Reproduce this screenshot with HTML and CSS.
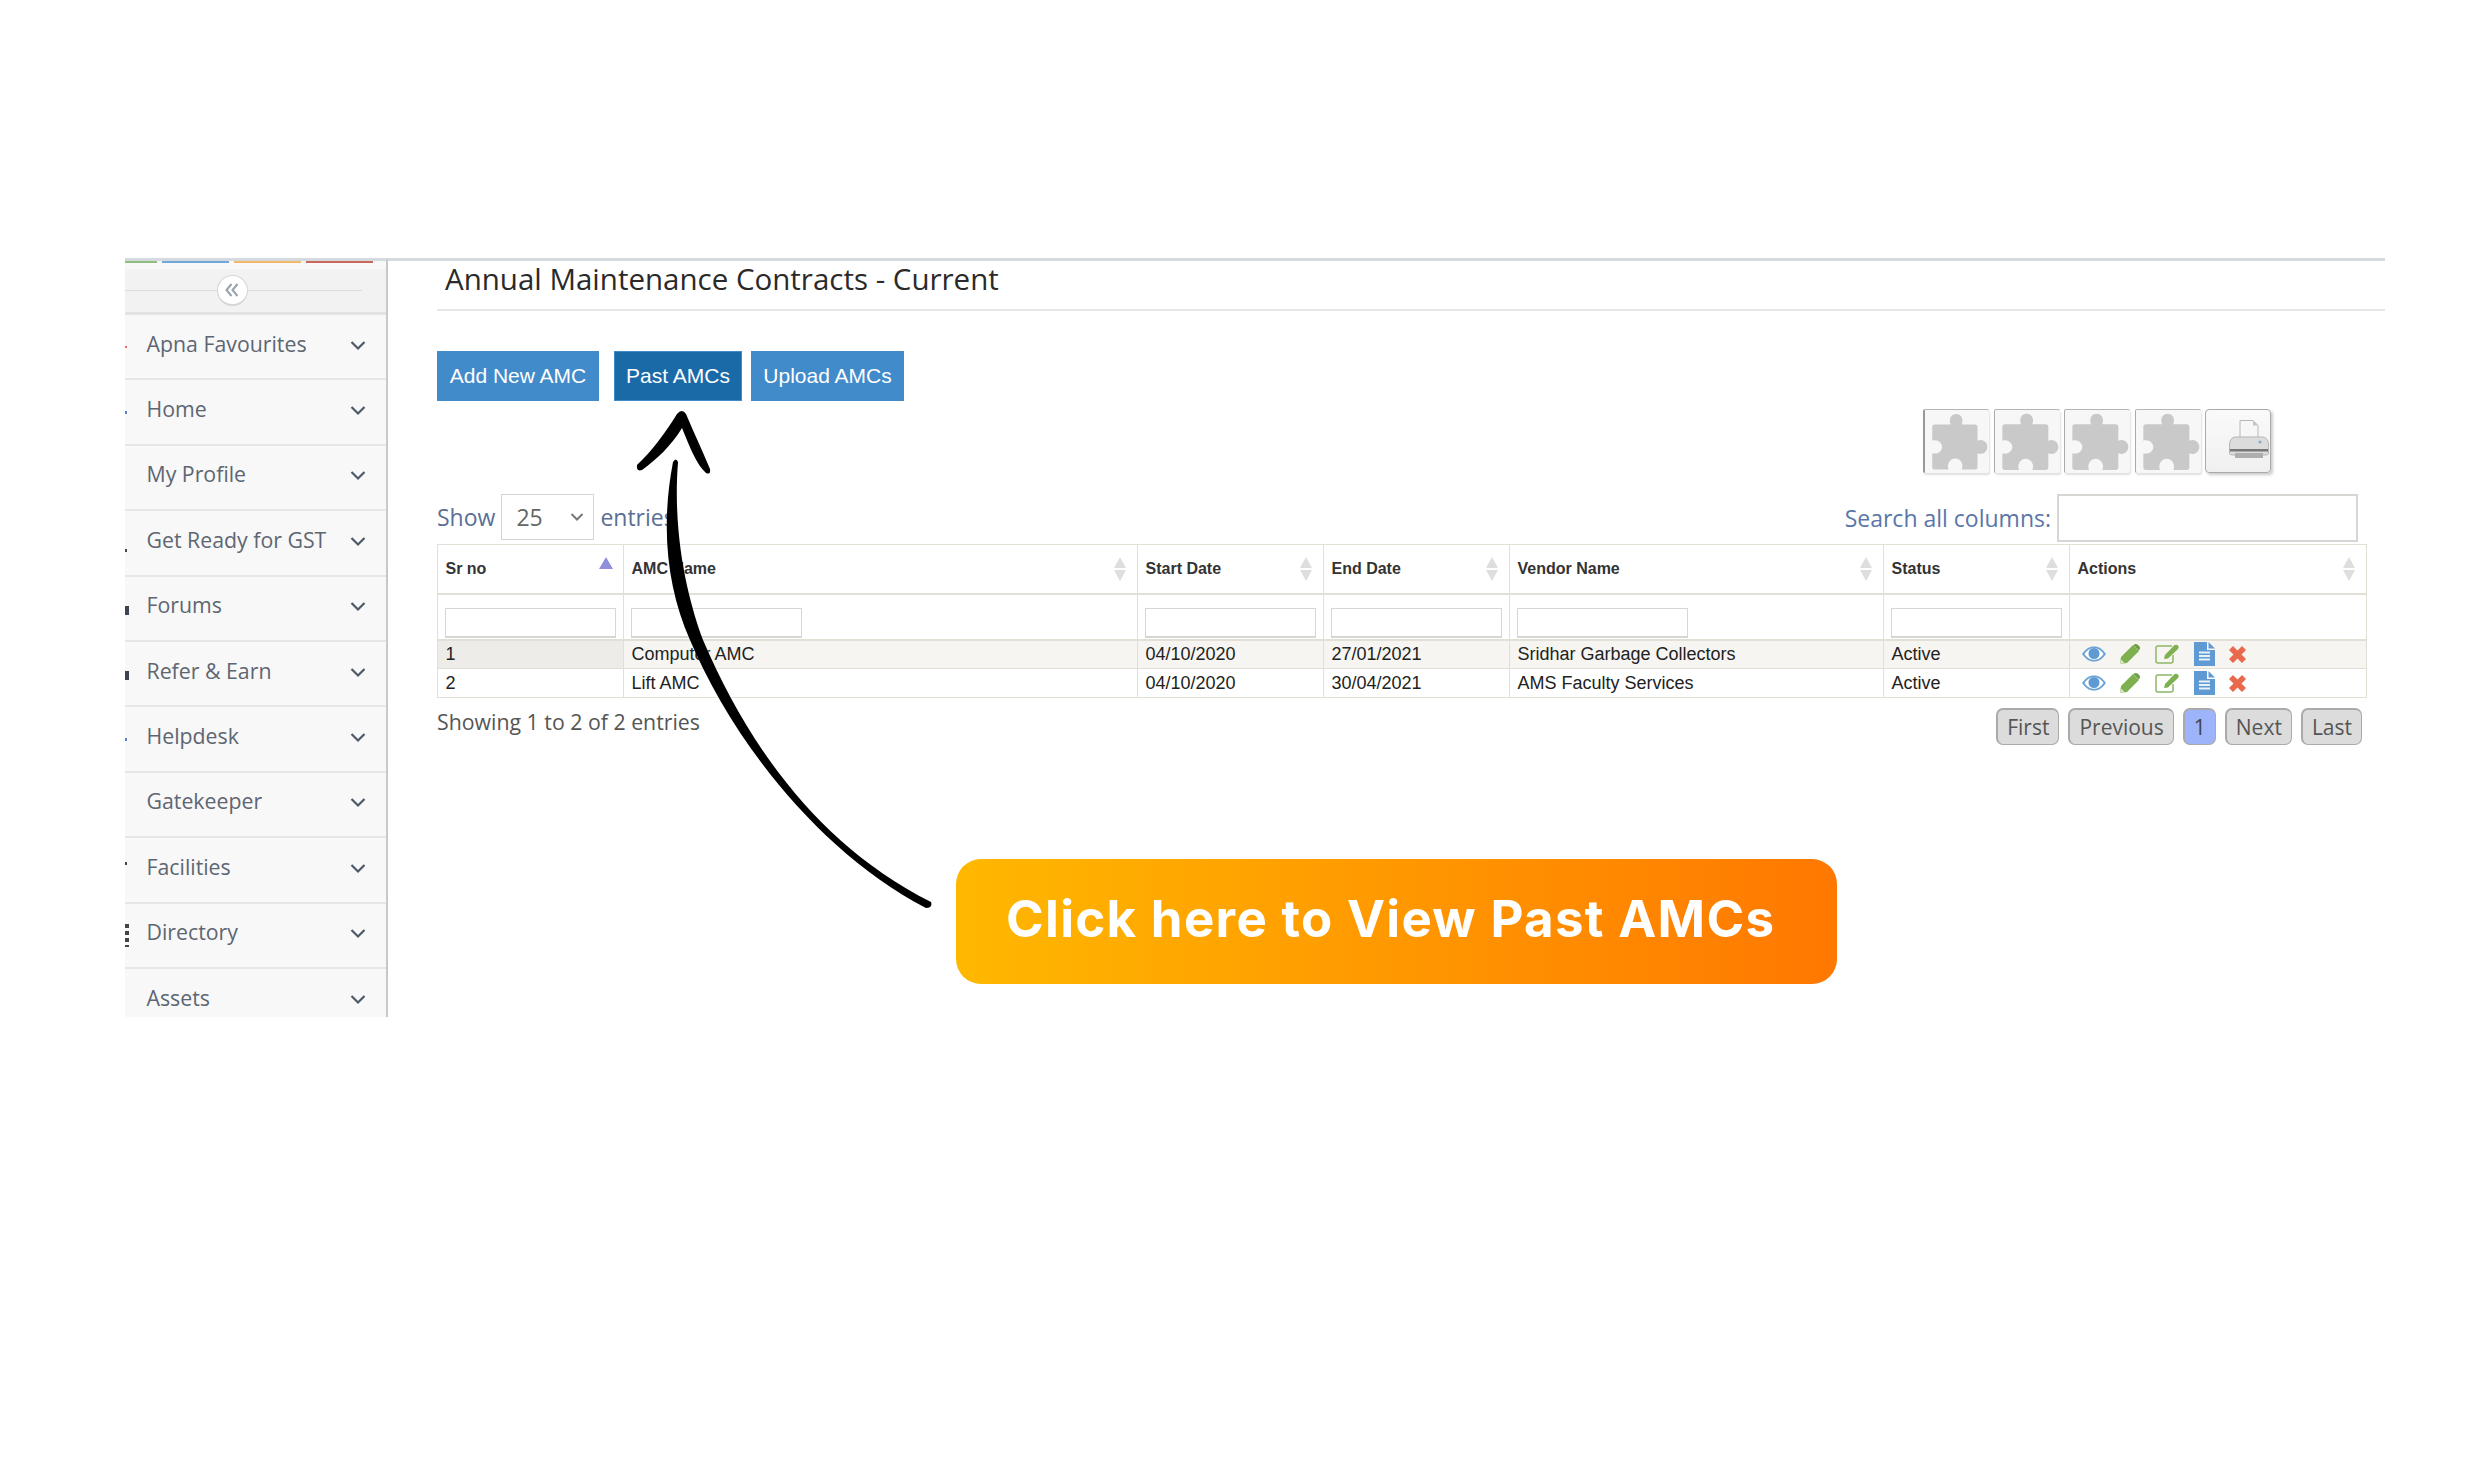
FILE: index.html
```html
<!DOCTYPE html>
<html lang="en">
<head>
<meta charset="utf-8">
<title>Annual Maintenance Contracts - Current</title>
<link rel="stylesheet" href="styles.css">
</head>
<body>
<svg class="defs" width="0" height="0" aria-hidden="true">
  <defs>
    <symbol id="puzzle" viewBox="0 0 195 195"><path d="M30 43H78C70 20 85 11 95 11C105 11 120 20 112 43H152Q160 43 160 51V92C180 85 190 100 190 111C190 122 180 137 160 130V172Q160 180 152 180H112C120 160 105 146 92 146C79 146 65 160 72 180H30Q22 180 22 172V130C40 135 52 122 52 111C52 100 40 87 22 92V51Q22 43 30 43Z"/></symbol>
    <symbol id="chev" viewBox="0 0 16 11"><path d="M1.500 2L8 8.500L14.500 2" fill="none" stroke="#4d5868" stroke-width="2.200"/></symbol>
    <symbol id="eye" viewBox="0 0 24 16"><path d="M0 8C5 1.500 8 0.500 12 0.500C16 0.500 19 1.500 24 8C19 14.500 16 15.500 12 15.500C8 15.500 5 14.500 0 8Z" fill="#6ba3d6"/><path d="M2.500 8C6 3 9 2.200 12 2.200C15 2.200 18 3 21.500 8C18 13 15 13.800 12 13.800C9 13.800 6 13 2.500 8Z" fill="#fff"/><circle cx="12" cy="7.500" r="5.500" fill="#5f9bd2"/></symbol>
    <symbol id="pencil" viewBox="0 0 20 20"><path d="M0 20L1 13L13 1L19 7L7 19Z" fill="#7fb050"/><path d="M14 .5Q16 -.5 17.500 .5L19.500 2.500Q20.500 4 19.500 5.500L18.800 6.500L13.500 1.200Z" fill="#6d9f42"/><path d="M0 20L1 15.500L4.500 19Z" fill="#dfe8d0"/></symbol>
    <symbol id="edit" viewBox="0 0 24 20"><path d="M17 2H3Q1 2 1 4V17Q1 19 3 19H16Q18 19 18 17V11" fill="none" stroke="#8db666" stroke-width="1.500"/><path d="M9 15L10 11L19 1.500Q21 0 23 1.500Q24.500 3.500 22.500 5.500L13 14.500Z" fill="#7fb050"/></symbol>
    <symbol id="file" viewBox="0 0 21 24"><path d="M0 0H13V8H21V24H0Z" fill="#5f9bd2"/><path d="M14.500 0L21 6.500H14.500Z" fill="#5f9bd2"/><path d="M5 10.500H16M5 14H16M5 17.500H16" stroke="#e8f0f8" stroke-width="1.800"/></symbol>
    <symbol id="cross" viewBox="0 0 17 17"><path d="M4 0L8.500 4.500L13 0L17 4L12.500 8.500L17 13L13 17L8.500 12.500L4 17L0 13L4.500 8.500L0 4Z" fill="#e8694d"/></symbol>
  </defs>
</svg>

<div class="page">
  <aside class="sidebar">
    <div class="stripes">
      <span class="stripe stripe-green"></span>
      <span class="stripe stripe-blue"></span>
      <span class="stripe stripe-orange"></span>
      <span class="stripe stripe-red"></span>
    </div>
    <div class="collapse">
      <span class="collapse-btn">
        <svg class="collapse-icon" viewBox="0 0 14 14"><path d="M6.500 1L1.500 7L6.500 13M12.500 1L7.500 7L12.500 13" fill="none" stroke="#98a1ac" stroke-width="2"/></svg>
      </span>
    </div>
    <ul class="menu">
      <li class="menu-item"><i class="mark mark-pink"></i><span>Apna Favourites</span><svg class="chev"><use href="#chev"/></svg></li>
      <li class="menu-item"><i class="mark mark-blue"></i><span>Home</span><svg class="chev"><use href="#chev"/></svg></li>
      <li class="menu-item"><span>My Profile</span><svg class="chev"><use href="#chev"/></svg></li>
      <li class="menu-item"><i class="mark mark-low"></i><span>Get Ready for GST</span><svg class="chev"><use href="#chev"/></svg></li>
      <li class="menu-item"><i class="mark mark-big"></i><span>Forums</span><svg class="chev"><use href="#chev"/></svg></li>
      <li class="menu-item"><i class="mark mark-big"></i><span>Refer &amp; Earn</span><svg class="chev"><use href="#chev"/></svg></li>
      <li class="menu-item"><i class="mark mark-blue"></i><span>Helpdesk</span><svg class="chev"><use href="#chev"/></svg></li>
      <li class="menu-item"><span>Gatekeeper</span><svg class="chev"><use href="#chev"/></svg></li>
      <li class="menu-item"><i class="mark mark-top"></i><span>Facilities</span><svg class="chev"><use href="#chev"/></svg></li>
      <li class="menu-item"><i class="mark mark-dots"></i><span>Directory</span><svg class="chev"><use href="#chev"/></svg></li>
      <li class="menu-item"><span>Assets</span><svg class="chev"><use href="#chev"/></svg></li>
    </ul>
  </aside>

  <main class="main">
    <h1 class="title">Annual Maintenance Contracts - Current</h1>

    <div class="actions">
      <a class="btn btn-add">Add New AMC</a>
      <a class="btn btn-past">Past AMCs</a>
      <a class="btn btn-upload">Upload AMCs</a>
    </div>

    <div class="toolbar">
      <span class="tool tool-first"><svg class="puzzle"><use href="#puzzle"/></svg></span>
      <span class="tool"><svg class="puzzle"><use href="#puzzle"/></svg></span>
      <span class="tool"><svg class="puzzle"><use href="#puzzle"/></svg></span>
      <span class="tool"><svg class="puzzle"><use href="#puzzle"/></svg></span>
      <span class="tool tool-print">
        <svg class="printer" viewBox="0 0 40 39">
          <path d="M11 .5H24L29 5.500V20H11Z" fill="#f7f7f7" stroke="#b8b8b8"/>
          <path d="M24 .5V5.500H29Z" fill="#c4c4c4"/>
          <path d="M.5 24Q1 18 6 17H34Q39 18 39.500 24V33Q39.500 35 37 35H3Q.5 35 .5 33Z" fill="#dcdcdc" stroke="#b5b5b5"/>
          <rect x="1" y="29" width="38" height="2.500" fill="#777"/>
          <rect x="6" y="33" width="28" height="5" fill="#aeaeae"/>
          <circle cx="31" cy="22" r="1.500" fill="#8aa5c9"/>
        </svg>
      </span>
    </div>

    <div class="controls">
      <label class="length">Show<span class="select"><span>25</span><svg class="select-chev" viewBox="0 0 14 10"><path d="M1.500 2L7 7.500L12.500 2" fill="none" stroke="#777" stroke-width="2"/></svg></span>entries</label>
      <label class="search">Search all columns: <span class="search-input"></span></label>
    </div>

    <table class="grid">
      <colgroup>
        <col class="c1"><col class="c2"><col class="c3"><col class="c4"><col class="c5"><col class="c6"><col class="c7">
      </colgroup>
      <thead>
        <tr class="head">
          <th><div class="th"><span>Sr no</span><i class="sort-asc"></i></div></th>
          <th><div class="th"><span>AMC Name</span><i class="sort"></i></div></th>
          <th><div class="th"><span>Start Date</span><i class="sort"></i></div></th>
          <th><div class="th"><span>End Date</span><i class="sort"></i></div></th>
          <th><div class="th"><span>Vendor Name</span><i class="sort"></i></div></th>
          <th><div class="th"><span>Status</span><i class="sort"></i></div></th>
          <th><div class="th"><span>Actions</span><i class="sort"></i></div></th>
        </tr>
        <tr class="filters">
          <td><span class="filter"></span></td>
          <td><span class="filter"></span></td>
          <td><span class="filter"></span></td>
          <td><span class="filter"></span></td>
          <td><span class="filter"></span></td>
          <td><span class="filter"></span></td>
          <td></td>
        </tr>
      </thead>
      <tbody>
        <tr class="row row-odd">
          <td class="sorted">1</td><td>Computer AMC</td><td>04/10/2020</td><td>27/01/2021</td><td>Sridhar Garbage Collectors</td><td>Active</td>
          <td><div class="icons"><svg class="i-eye"><use href="#eye"/></svg><svg class="i-pencil"><use href="#pencil"/></svg><svg class="i-edit"><use href="#edit"/></svg><svg class="i-file"><use href="#file"/></svg><svg class="i-cross"><use href="#cross"/></svg></div></td>
        </tr>
        <tr class="row">
          <td>2</td><td>Lift AMC</td><td>04/10/2020</td><td>30/04/2021</td><td>AMS Faculty Services</td><td>Active</td>
          <td><div class="icons"><svg class="i-eye"><use href="#eye"/></svg><svg class="i-pencil"><use href="#pencil"/></svg><svg class="i-edit"><use href="#edit"/></svg><svg class="i-file"><use href="#file"/></svg><svg class="i-cross"><use href="#cross"/></svg></div></td>
        </tr>
      </tbody>
    </table>

    <div class="foot">
      <div class="info">Showing 1 to 2 of 2 entries</div>
      <div class="pager">
        <a class="pg">First</a>
        <a class="pg">Previous</a>
        <a class="pg pg-on">1</a>
        <a class="pg">Next</a>
        <a class="pg">Last</a>
      </div>
    </div>
  </main>

  <svg class="arrow" viewBox="0 0 2481 1483" aria-hidden="true">
    <path d="M637 465C652 451 666 432 677 414Q682 408 686 414C694 433 703 452 710 469Q711 475 706 473C697 465 690 448 682 428C672 445 656 460 642 470Q636 472 637 465Z"/>
    <path d="M673 462C660 530 668 590 690 640C730 735 815 850 926 908Q933 908 931 902C818 845 748 745 703 640C690 605 672 540 678 462Q676 457 673 462Z"/>
  </svg>

  <div class="callout">Click here to View Past AMCs</div>
</div>
</body>
</html>
```
FILE: styles.css
```css
* { box-sizing: border-box; }
html, body { margin: 0; padding: 0; background: #fff; }
body { width: 2481px; height: 1483px; overflow: hidden; font-family: "Open Sans", sans-serif; }
.defs { position: absolute; }

.page { position: relative; width: 2481px; height: 1483px; padding: 258px 96px 0 125px; display: flex; align-items: flex-start; }

/* sidebar */
.sidebar { width: 263px; height: 759px; flex: none; overflow: hidden; background: #f8f8f8; border-top: 3px solid #d6d9dd; border-right: 2px solid #c9c9c9; }
.stripes { display: flex; height: 8px; align-items: flex-start; }
.stripe { height: 2px; display: block; margin-right: 5px; }
.stripe-green { width: 32px; background: #8fbf80; }
.stripe-blue { width: 67px; background: #70a8dc; }
.stripe-orange { width: 67px; background: #f2b866; }
.stripe-red { width: 67px; background: #c9685c; }
.collapse { height: 46px; background: #f2f2f2; border-bottom: 3px solid #e3e3e3; display: flex; align-items: center; justify-content: center; position: relative; padding-right: 47px; }
.collapse::before { content: ""; position: absolute; left: 0; top: 21px; width: 237px; height: 1px; background: #dcdcdc; }
.collapse-btn { position: relative; width: 31px; height: 31px; border-radius: 50%; background: #fff; border: 1px solid #d5d5d5; border-bottom-width: 2px; display: flex; align-items: center; justify-content: center; }
.collapse-icon { width: 14px; height: 14px; }
.menu { list-style: none; margin: 0; padding: 0; }
.menu-item { position: relative; height: 65.4px; padding: 0 20px 7px 21.500px; display: flex; align-items: center; justify-content: space-between; border-bottom: 2px solid #e6e6e6; font-size: 21.300px; color: #5d6672; }
.chev { width: 16px; height: 11px; flex: none; margin-top: 4px; }
.mark { position: absolute; left: 0; display: block; }
.mark-pink { top: 31px; width: 2px; height: 2px; background: #e66; }
.mark-blue { top: 31px; width: 2px; height: 3px; background: #5a86c5; }
.mark-low { top: 38px; width: 2px; height: 3px; background: #445; }
.mark-big { top: 29px; width: 4px; height: 9px; background: #3d4450; }
.mark-top { top: 24px; width: 2px; height: 3px; background: #445; }
.mark-dots { top: 20px; width: 4px; height: 23px; background: repeating-linear-gradient(#444 0 4px, transparent 4px 7px); }

/* main */
.main { flex: 1; min-width: 0; padding-left: 0; border-top: 3px solid #d6d9dd; }
.title { margin: 0 0 0 49px; height: 50px; padding: 0 0 0 8px; border-bottom: 2px solid #e6e6e6; font-size: 29.500px; font-weight: 500; line-height: 36px; color: #2a2a2a; white-space: nowrap; }
.actions { display: flex; margin: 40px 0 0 49px; }
.btn { display: flex; align-items: center; justify-content: center; height: 50px; background: #428bca; color: #fff; font: 21px "Liberation Sans", sans-serif; white-space: nowrap; }
.btn-add { width: 162px; margin-right: 15px; }
.btn-past { width: 128px; margin-right: 9px; background: #1b6aa8; border: 1px solid #428bca; }
.btn-upload { width: 153px; }

.toolbar { display: flex; justify-content: flex-end; margin-top: 8px; padding-right: 114px; gap: 4.500px; }
.tool { width: 66px; height: 64px; background: #f7f7f7; border-top: 1px solid #b5b5b5; border-left: 1px solid #aaa; border-radius: 2px; box-shadow: 1px 2px 2px #e0e0e0; display: flex; }
.tool-first { border-left: 2px solid #999; }
.tool-print { border: 1px solid #aaa; border-radius: 4px; background: linear-gradient(#fafafa, #f0f0f0); box-shadow: 2px 2px 3px #ccc; align-items: center; justify-content: flex-end; padding: 0 1px 4px 0; }
.puzzle { width: 65px; height: 65px; fill: #c9c9c9; }
.printer { width: 40px; height: 39px; }

.controls { display: flex; justify-content: space-between; margin: 21px 0 0 49px; height: 50px; padding-right: 27px; font-size: 23px; color: #5b6f96; }
.length { display: flex; gap: 6px; height: 46px; align-items: center; white-space: pre; }
.select { width: 93px; height: 46px; border: 1px solid #d4d4d4; padding: 0 5px 0 14px; display: flex; align-items: center; justify-content: space-between; color: #666; }
.select-chev { width: 14px; height: 10px; margin-right: 4px; }
.search { display: flex; gap: 6px; height: 48px; align-items: center; color: #5a76a8; }
.search-input { width: 301px; height: 48px; display: block; background: #fff; border: 2px solid #d6d6d2; }

.grid { table-layout: fixed; width: 1929px; margin-left: 49px; border-collapse: collapse; font: 18px "Liberation Sans", sans-serif; color: #222; }
.c1 { width: 186px; } .c2 { width: 514px; } .c3 { width: 186px; } .c4 { width: 186px; } .c5 { width: 374px; } .c6 { width: 186px; } .c7 { width: 297px; }
.grid th, .grid td { border: 1px solid #e2e0d6; padding: 0 0 0 7.500px; text-align: left; }
.head { height: 49px; }
.head th { border-bottom-width: 2px; font-size: 16px; color: #333; }
.th { display: flex; align-items: center; justify-content: space-between; padding-right: 10px; }
.sort { display: block; width: 13px; height: 24px; position: relative; }
.sort::before, .sort::after { content: ""; position: absolute; left: 0; border-left: 6.500px solid transparent; border-right: 6.500px solid transparent; }
.sort::before { top: 0; border-bottom: 11px solid #dedede; }
.sort::after { bottom: 0; border-top: 11px solid #dedede; }
.sort-asc { display: block; width: 0; height: 0; margin: -12px 0 0; border-left: 7px solid transparent; border-right: 7px solid transparent; border-bottom: 12px solid #8f8fdc; }
.filters { height: 46px; }
.grid .filters td { border-bottom-width: 2px; vertical-align: bottom; padding: 0 0 1px 7px; }
.filter { display: block; width: 171px; height: 30px; background: #fff; border: 1px solid #d6d6d2; border-bottom-width: 2px; }
.row { height: 29px; }
.row-odd { background: #f6f5f1; }
.sorted { background: #edece8; }
.icons { display: flex; align-items: center; height: 24px; }
.i-eye { width: 24px; height: 16px; margin-left: 4px; }
.i-pencil { width: 20px; height: 20px; margin-left: 14px; }
.i-edit { width: 24px; height: 20px; margin-left: 15px; }
.i-file { width: 21px; height: 24px; margin-left: 15px; }
.i-cross { width: 17px; height: 17px; margin-left: 14px; }

.foot { display: flex; justify-content: space-between; align-items: flex-start; width: 1929px; margin: 10px 0 0 49px; padding-right: 4px; }
.info { font-size: 21.300px; line-height: 28px; color: #555; }
.pager { display: flex; gap: 9px; }
.pg { display: flex; align-items: center; justify-content: center; height: 37px; padding: 0 9px; background: #dcdcdc; border: 1px solid #aaa; border-top-width: 2px; border-left-width: 2px; border-radius: 7px; font-size: 21px; color: #555; }
.pg-on { background: #9db4fb; color: #444; }

/* annotation */
.arrow { position: absolute; left: 0; top: 0; width: 2481px; height: 1483px; fill: #000; }
.callout { position: absolute; left: 956px; top: 859px; width: 881px; height: 125px; padding: 0 0 7px 50px; display: flex; align-items: center; border-radius: 25px; background: linear-gradient(90deg, #ffb800, #ff7800); color: #fff; font-family: Inter, "Open Sans", sans-serif; font-size: 51px; font-weight: 700; letter-spacing: 1.300px; white-space: nowrap; }
```
